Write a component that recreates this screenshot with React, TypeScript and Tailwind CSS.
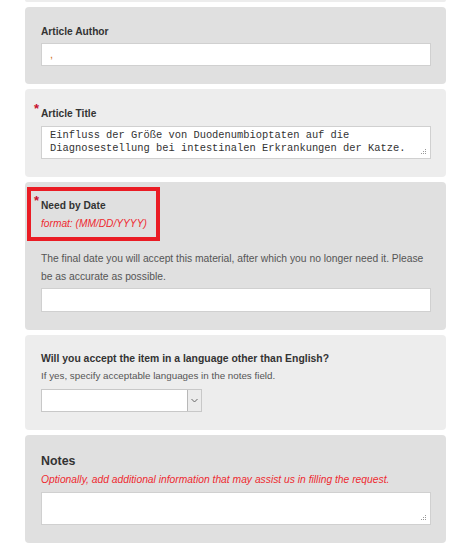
import React from "react";

function Grip() {
    // little dotted resize handle in the textarea corner
    return (
        <svg className="absolute right-[3px] bottom-[3px]" width="7" height="7" viewBox="0 0 7 7">
            <rect x="5" y="1" width="1" height="1" fill="#999" />
            <rect x="3" y="3" width="1" height="1" fill="#999" />
            <rect x="5" y="3" width="1" height="1" fill="#999" />
            <rect x="1" y="5" width="1" height="1" fill="#999" />
            <rect x="3" y="5" width="1" height="1" fill="#999" />
            <rect x="5" y="5" width="1" height="1" fill="#999" />
        </svg>
    );
}

function Star() {
    return (
        <span className="absolute left-[-7px] top-[-4px] text-[13px] font-bold leading-none text-[#c8102e]">*</span>
    );
}

export default function App() {
    return (
        <div className="font-[Liberation_Sans,Arial,sans-serif] bg-white min-h-[550px] w-[451px] pl-[25px]">
            <div className="flex w-[421px] flex-col gap-[5px]">
                {/* tail of the previous panel */}
                <div className="h-[2px] rounded-b bg-[#ededed]" />

                {/* Article Author */}
                <div className="rounded bg-[#e0e0e0] pt-[17px] pb-[18px] pl-[16px] pr-[15px]">
                    <div className="mb-[3px] text-[10.2px] leading-[16px] font-bold text-[#333]">Article Author</div>
                    <div className="h-[23px] border border-[#d0d0d0] bg-white pl-[8px] text-[11px] leading-[20px] text-[#d07020]">,</div>
                </div>

                {/* Article Title */}
                <div className="rounded bg-[#ededed] pt-[17px] pb-[18px] pl-[16px] pr-[15px]">
                    <div className="relative mb-[4px] text-[10.2px] leading-[16px] font-bold text-[#333]">
                        <Star />
                        Article Title
                    </div>
                    <div className="font-[Liberation_Mono,Courier_New,monospace] relative h-[33px] border border-[#d0d0d0] bg-white pl-[8px] pt-[2px] text-[10.4px] leading-[13px] text-[#333]">
                        <div>Einfluss der Größe von Duodenumbioptaten auf die</div>
                        <div>Diagnosestellung bei intestinalen Erkrankungen der Katze.</div>
                        <Grip />
                    </div>
                </div>

                {/* Need by Date */}
                <div className="relative rounded bg-[#e0e0e0] pt-[16px] pb-[18px] pl-[16px] pr-[15px]">
                    <div className="absolute left-[2px] top-[5px] h-[54px] w-[133px] border-[4px] border-[#ea1c24]" />
                    <div className="relative text-[10.2px] leading-[16px] font-bold text-[#333]">
                        <Star />
                        Need by Date
                    </div>
                    <div className="mt-[2px] text-[10.2px] leading-[16px] italic text-[#ee2a30]">format: (MM/DD/YYYY)</div>
                    <p className="mt-[18px] mb-[2px] text-[10.3px] leading-[18px] text-[#555]">
                        The final date you will accept this material, after which you no longer need it. Please be as accurate as possible.
                    </p>
                    <div className="h-[24px] border border-[#d0d0d0] bg-white" />
                </div>

                {/* Language */}
                <div className="rounded bg-[#ededed] pt-[16px] pb-[18px] pl-[16px] pr-[15px]">
                    <div className="text-[10.4px] leading-[16px] font-bold text-[#333]">
                        Will you accept the item in a language other than English?
                    </div>
                    <div className="mt-[1px] mb-[5px] text-[9.8px] leading-[16px] text-[#555]">
                        If yes, specify acceptable languages in the notes field.
                    </div>
                    <div className="flex h-[23px] w-[161px] border border-[#c8c8c8] bg-white">
                        <div className="flex-1" />
                        <div className="flex w-[14px] items-center justify-center border-l border-[#b8b8b8] bg-[#ececec]">
                            <svg width="7" height="5" viewBox="0 0 7 5">
                                <path d="M0.5 1 L3.5 4 L6.5 1" fill="none" stroke="#666" strokeWidth="1" />
                            </svg>
                        </div>
                    </div>
                </div>

                {/* Notes */}
                <div className="rounded bg-[#e0e0e0] pt-[17px] pb-[18px] pl-[16px] pr-[15px]">
                    <div className="text-[12.4px] leading-[18px] font-bold text-[#333]">Notes</div>
                    <div className="mt-[2px] mb-[4px] text-[10.3px] leading-[16px] italic text-[#ee2a30]">
                        Optionally, add additional information that may assist us in filling the request.
                    </div>
                    <div className="relative h-[33px] border border-[#d0d0d0] bg-white">
                        <Grip />
                    </div>
                </div>
            </div>
        </div>
    );
}
